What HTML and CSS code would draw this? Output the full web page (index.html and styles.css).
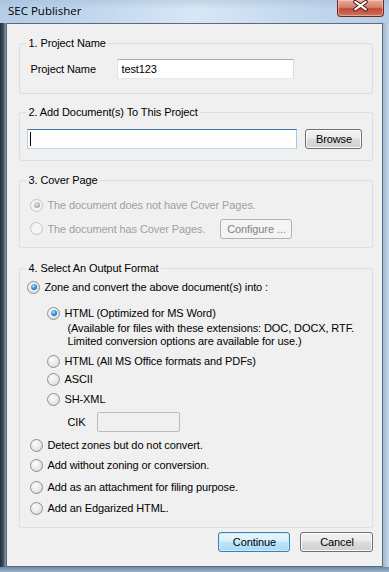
FILE: index.html
```html
<!DOCTYPE html>
<html lang="en">
<head>
    <meta charset="UTF-8">
    <meta name="viewport" content="width=device-width, initial-scale=1.0">
    <title>SEC Publisher</title>
    <link rel="stylesheet" href="styles.css">
</head>
<body>

<div class="window">
    <!-- Title bar -->
    <div class="titlebar">
        <span class="title">SEC Publisher</span>
        <button class="close" title="Close">
            <svg width="47" height="17" viewBox="0 0 47 17">
                <path d="M18 1.5 L29 9.5 M29 1.5 L18 9.5" stroke="#4a1d16" stroke-width="4.2" stroke-linecap="round"/>
                <path d="M18 1.5 L29 9.5 M29 1.5 L18 9.5" stroke="#fff" stroke-width="2.2" stroke-linecap="round"/>
            </svg>
        </button>
    </div>

    <div class="frame">
        <div class="edge-left"></div>

        <div class="client">
            <!-- 1. Project name -->
            <fieldset class="group g1">
                <legend>1. Project Name</legend>
                <div class="name-row">
                    <label for="project" class="name-label">Project Name</label>
                    <input type="text" id="project" class="text name-input" value="test123">
                </div>
            </fieldset>

            <!-- 2. Documents -->
            <fieldset class="group g2">
                <legend>2. Add Document(s) To This Project</legend>
                <div class="doc-row">
                    <div class="text doc-field focus"><span class="caret"></span></div>
                    <button class="btn browse">Browse</button>
                </div>
            </fieldset>

            <!-- 3. Cover page -->
            <fieldset class="group g3">
                <legend>3. Cover Page</legend>
                <div class="opt disabled">
                    <span class="radio on"></span>
                    <span>The document does not have Cover Pages.</span>
                </div>
                <div class="opt disabled cover-row">
                    <span class="radio"></span>
                    <span class="cover-label">The document has Cover Pages.</span>
                    <button class="btn configure" disabled>Configure ...</button>
                </div>
            </fieldset>

            <!-- 4. Output format -->
            <fieldset class="group g4">
                <legend>4. Select An Output Format</legend>
                <div class="opt zone">
                    <span class="radio on"></span>
                    <span>Zone and convert the above document(s) into :</span>
                </div>
                <div class="opt sub html-word">
                    <span class="radio on"></span>
                    <span>HTML (Optimized for MS Word)</span>
                </div>
                <div class="desc">
                    (Available for files with these extensions: DOC, DOCX, RTF.<br>
                    Limited conversion options are available for use.)
                </div>
                <div class="opt sub html-all">
                    <span class="radio"></span>
                    <span>HTML (All MS Office formats and PDFs)</span>
                </div>
                <div class="opt sub">
                    <span class="radio"></span>
                    <span>ASCII</span>
                </div>
                <div class="opt sub shxml">
                    <span class="radio"></span>
                    <span>SH-XML</span>
                </div>
                <div class="cik-row">
                    <span class="cik-label">CIK</span>
                    <input type="text" class="text cik-input" disabled>
                </div>
                <div class="opt detect">
                    <span class="radio"></span>
                    <span>Detect zones but do not convert.</span>
                </div>
                <div class="opt gap2">
                    <span class="radio"></span>
                    <span>Add without zoning or conversion.</span>
                </div>
                <div class="opt gap4">
                    <span class="radio"></span>
                    <span>Add as an attachment for filing purpose.</span>
                </div>
                <div class="opt gap3">
                    <span class="radio"></span>
                    <span>Add an Edgarized HTML.</span>
                </div>
            </fieldset>

            <div class="actions">
                <button class="btn default">Continue</button>
                <button class="btn cancel">Cancel</button>
            </div>
        </div>

        <div class="edge-right"></div>
    </div>
    <div class="edge-bottom"></div>
</div>

</body>
</html>
```

FILE: styles.css
```css
body {
    margin: 0;
    font-family: "Liberation Sans", Arial, sans-serif;
    font-size: 11px;
    letter-spacing: -0.1px;
    color: #000;
    background: #8fa9c4;
}
.window {
    width: 389px;
    height: 572px;
    display: flex;
    flex-direction: column;
}

/* title bar */
.titlebar {
    height: 23px;
    flex: none;
    display: flex;
    justify-content: space-between;
    align-items: flex-start;
    background:
        linear-gradient(to bottom, rgba(150, 175, 205, 0.35), rgba(255, 255, 255, 0) 40%),
        linear-gradient(to right, #b5cde7 0%, #c3d7ee 25%, #d8e7f5 50%, #c5d9ee 75%, #b6cde7 100%);
}
.title {
    font-family: "Open Sans", "Noto Sans", sans-serif;
    font-size: 11.5px;
    letter-spacing: 0;
    margin: 3px 0 0 8px;
    color: #000;
}
.close {
    width: 47px;
    height: 17px;
    margin-right: 5px;
    padding: 0;
    border: 1px solid #6b2a20;
    border-top: none;
    border-radius: 0 0 4px 4px;
    background: linear-gradient(to bottom, #e9a99b 0%, #d7806e 45%, #c14a34 55%, #d0735c 100%);
    box-shadow: inset 0 0 0 1px rgba(255, 220, 210, 0.5);
    display: flex;
}

/* window frame */
.frame {
    flex: 1;
    display: flex;
}
.edge-left {
    width: 7px;
    background: linear-gradient(to right, #26303b 0, #3c4957 3px, #6f8294 5px, #9db2c7 7px);
}
.edge-right {
    width: 6px;
    background: linear-gradient(to right, #9fb7d1, #c6d8ea);
}
.edge-bottom {
    height: 5px;
    flex: none;
    background: linear-gradient(to bottom, #6d88a4, #9cb3ca);
}

/* client area */
.client {
    flex: 1;
    display: flex;
    flex-direction: column;
    background: #f0f0f0;
    border: 1px solid #5c6b7a;
    padding: 13px 9px 0 12px;
}

/* group boxes */
.group {
    margin: 0;
    min-width: 0;
    border: 1px solid #d5dfe5;
    border-radius: 3px;
    padding: 9px 10px 14px 10px;
}
.group legend {
    padding: 0 2px;
    margin-left: -4px;
    line-height: 13px;
}
.g2 {
    margin-top: 12px;
    padding-top: 10px;
    padding-bottom: 11px;
}
.g3 {
    margin-top: 13px;
    padding-bottom: 9px;
}
.g4 {
    margin-top: 14px;
    padding-top: 3px;
    padding-bottom: 10px;
}

/* text boxes */
.text {
    box-sizing: border-box;
    height: 20px;
    border: 1px solid;
    border-color: #abadb3 #dbdfe6 #e3e9ef #e2e3ea;
    background: #fff;
    font-family: inherit;
    font-size: 11px;
    letter-spacing: inherit;
    padding: 0 3px;
    margin: 0;
    outline: none;
}
.text.focus {
    border-color: #3d7bad #a4c9e3 #b7d9ed #b5cfe7;
}
.name-row, .doc-row, .cik-row {
    display: flex;
    align-items: center;
}
.name-label {
    width: 87px;
}
.name-input {
    width: 177px;
}
.doc-field {
    width: 270px;
    margin-left: -3px;
    display: flex;
    align-items: center;
    padding-left: 2px;
}
.caret {
    width: 1px;
    height: 14px;
    background: #000;
}
.browse {
    width: 57px;
    height: 19px;
    margin-left: 8px;
}

/* radio options */
.opt {
    display: flex;
    align-items: center;
    gap: 4px;
    height: 18px;
}
.radio {
    flex: none;
    box-sizing: border-box;
    width: 13px;
    height: 13px;
    border-radius: 50%;
    border: 1px solid #8e8f8f;
    background: radial-gradient(circle at 40% 35%, #fdfdfd 0, #e8e8e8 55%, #cfcfcf 100%);
    display: flex;
    align-items: center;
    justify-content: center;
}
.radio.on::after {
    content: "";
    width: 6px;
    height: 6px;
    border-radius: 50%;
    background: radial-gradient(circle at 40% 35%, #a9e4ff 0, #3a97df 45%, #0d4d90 100%);
}
.opt.disabled {
    color: #a0a0a0;
}
.opt.disabled .radio {
    border-color: #c4c4c4;
    background: #f4f4f4;
}
.opt.disabled .radio.on::after {
    background: radial-gradient(circle at 40% 35%, #e6e6e6 0, #b0b0b0 60%, #949494 100%);
}
.cover-row {
    margin-top: 5px;
    height: 19px;
}
.cover-label {
    width: 169px;
}
.configure {
    width: 72px;
    height: 19px;
}
.zone {
    margin-left: -3px;
}
.sub {
    margin-left: 17px;
}
.html-word {
    margin-top: 8px;
}
.desc {
    padding-left: 37px;
    line-height: 13px;
}
.html-all {
    margin-top: 4px;
}
.shxml {
    margin-top: 2px;
}
.cik-row {
    margin-top: 4px;
    padding-left: 37px;
}
.cik-label {
    width: 30px;
}
.cik-input {
    width: 83px;
    border: 1px solid #b8bcbf;
    border-radius: 2px;
    background: #f0f0f0;
}
.detect {
    margin-top: 4px;
}
.gap2 {
    margin-top: 2px;
}
.gap3 {
    margin-top: 3px;
}
.gap4 {
    margin-top: 4px;
}

/* buttons */
.btn {
    box-sizing: border-box;
    height: 20px;
    padding: 0;
    border: 1px solid #707070;
    border-radius: 3px;
    background: linear-gradient(to bottom, #f2f2f2 0%, #ebebeb 45%, #dddddd 50%, #cfcfcf 100%);
    box-shadow: inset 0 0 0 1px #fbfbfb;
    font-family: inherit;
    font-size: 11px;
    letter-spacing: inherit;
    color: #000;
}
.btn:disabled {
    border-color: #adb2b5;
    background: #f4f4f4;
    box-shadow: none;
    color: #838383;
}
.btn.default {
    border-color: #3c7fb1;
    background: linear-gradient(to bottom, #eaf6fd 0%, #d9f0fc 45%, #bee6fd 50%, #a7d9f5 100%);
    box-shadow: inset 0 0 0 1px #cdebfb;
}
.actions {
    display: flex;
    justify-content: flex-end;
    gap: 10px;
    margin-top: 4px;
}
.actions .btn {
    width: 72px;
}
.actions .cancel {
    width: 73px;
}
```
